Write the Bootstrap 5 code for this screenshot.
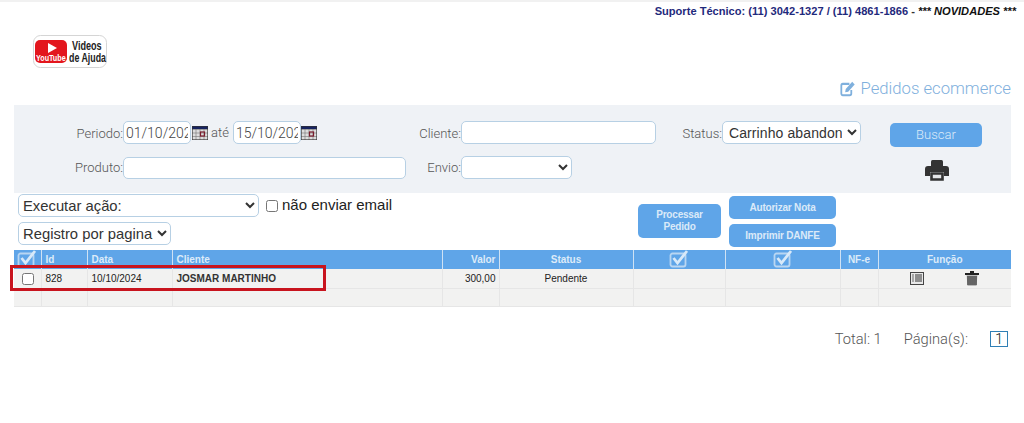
<!DOCTYPE html>
<html lang="pt-BR">
<head>
<meta charset="utf-8">
<title>Pedidos ecommerce</title>
<link href="https://cdn.jsdelivr.net/npm/bootstrap@5.3.0/dist/css/bootstrap.min.css" rel="stylesheet">
<style>
html,body{height:423px;overflow:hidden}
body{background:#fff;font-family:"Liberation Sans",Arial,sans-serif;color:#222}
.topband{height:2px;background:#f1f1f1}
.support{height:19px;padding:3px 8px 0 0;text-align:right;font-size:11.1px;line-height:13px;font-weight:700;color:#1f2a7c}
.support i{color:#111}
.support .plain{color:#333}
.logo-wrap{padding:14px 0 0 33px;height:52px}
.logo-wrap text{font-family:"Liberation Sans",sans-serif;font-weight:700}
.page-title{height:32px;padding:0 13px 0 0;display:flex;justify-content:flex-end;align-items:center;gap:5px;font:300 16.7px/20px Roboto,sans-serif;color:#7fb0dd}
.panel-wrap{margin:0 13px 0 14px;position:relative}
.filter-panel{background:#eff2f6;height:88px;display:grid;grid-template-columns:109px 283px 55px 195px 66px 139px 1fr;grid-template-rows:39px 35px;align-items:end;font:300 13px/20px Roboto,sans-serif;color:#555}
.lbl{text-align:right}
.lbl-low{padding-bottom:1px}
.fld{height:23px;border:1px solid #b7d0e4;border-radius:5px;background:#fff;padding:0 2px;font:300 14px/20px Roboto,sans-serif;color:#444;outline:0;min-width:0}
.fld-low{height:22px}
.sel{appearance:auto;font:14px "Liberation Sans",sans-serif;letter-spacing:.1px;color:#333}
.envio-sel{width:111px;height:23px}
.date{width:68px}
.cal{width:16px;height:14px;flex:none}
.cal-gap{margin-left:1px}
.date-row{display:flex;align-items:center}
.ate{margin:0 4px 0 3px}
.blue-btn{background:#5fa5e8;color:#dbeaf8;border:0;border-radius:5px;font:700 10px/12px "Liberation Sans",sans-serif;letter-spacing:-.2px;padding:0;display:flex;align-items:center;justify-content:center;text-align:center}
.blue-btn:hover{background:#5fa5e8;color:#dbeaf8}
.search-btn{width:92px;height:24px;margin-left:29px;font:300 13px/16px Roboto,sans-serif;letter-spacing:0}
.search-cell{align-self:start;padding-top:18px}
.print-cell{padding-left:64px;align-self:start;padding-top:16px;grid-column:7;grid-row:2}
.toolbar{height:57px;position:relative;display:flex}
.tool-left{width:624px;padding:1px 0 0 4px}
.tool-line{display:flex;align-items:center;font-size:15px;color:#222;height:23px}
.tool-line+.tool-line{margin-top:5px}
.tool-line input{width:12px;height:12px;margin:0 4px 0 7px}
.tool-sel{height:23px;border:1px solid #b7d0e4;border-radius:5px;padding:0;background:#fff;font:14.8px "Liberation Sans",sans-serif;color:#333;outline:0}
.sel-action{width:241px}
.sel-page{width:153px}
.proc{width:83px;height:34px;margin-top:11px}
.tool-stack{width:107px;margin:3px 0 0 8px;display:flex;flex-direction:column;gap:5px}
.tool-stack .blue-btn{height:23px}
.grid-tbl{width:997px;table-layout:fixed;border-collapse:collapse;font-size:10px;line-height:12px}
.grid-tbl th{background:#5fa5e8;color:#dcebf9;font-weight:700;height:19px;padding:1px 4px 0;border-right:1px solid #cfe2f4;vertical-align:middle;overflow:hidden}
.grid-tbl td{background:#f2f2f1;height:19px;padding:1px 4px 0;border-right:1px solid #e6e6e6;border-bottom:1px solid #e6e6e6;color:#222;font-weight:400;vertical-align:middle}
.grid-tbl tr:last-child td{height:18px}
.grid-tbl th:last-child,.grid-tbl td:last-child{border-right:0}
.grid-tbl .txt-r{padding-right:3px}
.grid-tbl .client{font-weight:700;color:#333}
.grid-tbl input{display:block;width:12px;height:12px;margin:1px 0 0 8px}
.grid-tbl th svg{display:block;margin:-1px auto 0}
.fn-cell{display:flex;justify-content:space-between;align-items:center;padding:0 32px 0 31px}
.highlight{position:absolute;left:-4px;top:160px;width:316px;height:26px;border:3px solid #c8141e;pointer-events:none}
.pager{display:flex;justify-content:flex-end;align-items:center;height:18px;margin-top:23px;padding-right:16px;font:300 14.7px/18px Roboto,sans-serif;color:#555;gap:22px}
.page-box{width:18px;height:16px;border:1px solid #2f7fb5;display:flex;align-items:center;justify-content:center;color:#222}
</style>
</head>
<body>
<div class="topband"></div>
<div class="support">Suporte Técnico: (11) 3042-1327 / (11) 4861-1866 <span class="plain">-</span> <i>*** NOVIDADES ***</i></div>
<div class="logo-wrap">
<svg width="74" height="33" viewBox="0 0 74 33" role="img" aria-label="Videos de Ajuda">
<rect x=".5" y=".5" width="73" height="32" rx="7" fill="#fff" stroke="#d5d5d5"/>
<rect x="2" y="5" width="32" height="23" rx="5" fill="#e3161d"/>
<path d="M15 8l9 5-9 5z" fill="#fff"/>
<text transform="translate(3 26) scale(.8 1)" font-size="9" fill="#fff">YouTube</text>
<text transform="translate(39 15) scale(.7 1)" font-size="13" fill="#222">Videos</text>
<text transform="translate(36 27) scale(.68 1)" font-size="13" fill="#222">de Ajuda</text>
</svg>
</div>
<div class="page-title">
<svg width="16" height="16" viewBox="0 0 17 15" preserveAspectRatio="none"><path d="M12 8.500v3.200c0 .9-.7 1.600-1.600 1.600H3c-.9 0-1.600-.7-1.600-1.600V4.300c0-.9.7-1.600 1.600-1.600h7" fill="none" stroke="#7fb0dd" stroke-width="1.900"/><path d="M5.500 10.500l.6-3L13 .8l2.600 2.500-6.900 6.700z" fill="#7fb0dd"/></svg>
<span>Pedidos ecommerce</span>
</div>
<div class="panel-wrap">
<div class="filter-panel">
<div class="lbl">Periodo:</div>
<div class="date-row">
<input class="fld date" value="01/10/2024">
<svg class="cal cal-gap" viewBox="0 0 16 14"><rect width="16" height="14" fill="#ddd"/><rect width="16" height="3" fill="#17235f"/><path d="M0 3.500h16M0 7h16M0 10.500h16M4 3v11M8 3v11M12 3v11" stroke="#777" stroke-width=".6"/><rect x="8.500" y="6" width="4" height="4" fill="none" stroke="#7a1c2c" stroke-width="1.200"/><rect x=".3" y=".3" width="15.400" height="13.400" fill="none" stroke="#333" stroke-width=".6"/></svg>
<span class="ate">até</span>
<input class="fld date" value="15/10/2024">
<svg class="cal" viewBox="0 0 16 14"><rect width="16" height="14" fill="#ddd"/><rect width="16" height="3" fill="#17235f"/><path d="M0 3.500h16M0 7h16M0 10.500h16M4 3v11M8 3v11M12 3v11" stroke="#777" stroke-width=".6"/><rect x="8.500" y="6" width="4" height="4" fill="none" stroke="#7a1c2c" stroke-width="1.200"/><rect x=".3" y=".3" width="15.400" height="13.400" fill="none" stroke="#333" stroke-width=".6"/></svg>
</div>
<div class="lbl">Cliente:</div>
<input class="fld">
<div class="lbl">Status:</div>
<select class="fld sel"><option>Carrinho abandonado</option></select>
<div class="search-cell"><button class="btn blue-btn search-btn" type="button">Buscar</button></div>
<div class="lbl lbl-low">Produto:</div>
<input class="fld fld-low">
<div class="lbl lbl-low">Envio:</div>
<select class="fld sel envio-sel"><option></option></select>
<div></div>
<div></div>
<div class="print-cell">
<svg width="24" height="21" viewBox="0 0 24 21"><path d="M6 1.500A1.500 1.500 0 0 1 7.500 0h9A1.500 1.500 0 0 1 18 1.500V6H6z" fill="#333"/><path d="M3 6h18a3 3 0 0 1 3 3v7h-5v-4H5v4H0V9a3 3 0 0 1 3-3z" fill="#333"/><path d="M6.500 13.500h11v6h-11z" fill="#e4e6e8" stroke="#333" stroke-width="2.600"/></svg>
</div>
</div>
<div class="toolbar">
<div class="tool-left">
<div class="tool-line">
<select class="tool-sel sel-action"><option>Executar ação:</option></select>
<input type="checkbox"><span>não enviar email</span>
</div>
<div class="tool-line">
<select class="tool-sel sel-page"><option>Registro por pagina</option></select>
</div>
</div>
<button class="btn blue-btn proc" type="button">Processar<br>Pedido</button>
<div class="tool-stack">
<button class="btn blue-btn" type="button">Autorizar Nota</button>
<button class="btn blue-btn" type="button">Imprimir DANFE</button>
</div>
</div>
<table class="grid-tbl">
<colgroup><col style="width:27px"><col style="width:46px"><col style="width:85px"><col style="width:270px"><col style="width:57px"><col style="width:134px"><col style="width:92px"><col style="width:115px"><col style="width:38px"><col style="width:133px"></colgroup>
<thead><tr>
<th class="p-0"><svg width="20" height="18" viewBox="0 0 20 18"><rect x="1.500" y="3.500" width="15" height="13" rx="2" fill="none" stroke="#b9d6f2" stroke-width="1.800"/><path d="M4.500 8l4 5L18 1" fill="none" stroke="#d8e9f9" stroke-width="2.800"/></svg></th>
<th>Id</th><th>Data</th><th>Cliente</th><th class="text-end txt-r">Valor</th><th class="text-center">Status</th>
<th class="p-0"><svg width="20" height="18" viewBox="0 0 20 18"><rect x="1.500" y="3.500" width="15" height="13" rx="2" fill="none" stroke="#b9d6f2" stroke-width="1.800"/><path d="M4.500 8l4 5L18 1" fill="none" stroke="#d8e9f9" stroke-width="2.800"/></svg></th>
<th class="p-0"><svg width="20" height="18" viewBox="0 0 20 18"><rect x="1.500" y="3.500" width="15" height="13" rx="2" fill="none" stroke="#b9d6f2" stroke-width="1.800"/><path d="M4.500 8l4 5L18 1" fill="none" stroke="#d8e9f9" stroke-width="2.800"/></svg></th>
<th class="text-center p-0">NF-e</th><th class="text-center">Função</th>
</tr></thead>
<tbody>
<tr>
<td class="p-0"><input type="checkbox"></td>
<td>828</td><td>10/10/2024</td><td class="client">JOSMAR MARTINHO</td><td class="text-end txt-r">300,00</td><td class="text-center">Pendente</td><td></td><td></td><td></td>
<td class="p-0"><div class="fn-cell">
<svg width="14" height="13" viewBox="0 0 14 13"><rect x=".5" y=".5" width="13" height="12" fill="#e8e8e8" stroke="#444"/><path d="M5 3h7M5 5h7M5 7h7M5 9h7" stroke="#333"/><path d="M2 3h2M2 5h2M2 7h2M2 9h2" stroke="#666"/></svg>
<svg width="14" height="15" viewBox="0 0 14 15"><path d="M0 2h14v2H0zM5 0h4v2H5z" fill="#222"/><path d="M1.500 4h11l-1 11h-9z" fill="#bbb"/><path d="M3 5v9M5 5v9M7 5v9M9 5v9M11 5v9" stroke="#111" stroke-width="1"/></svg>
</div></td>
</tr>
<tr><td></td><td></td><td></td><td></td><td></td><td></td><td></td><td></td><td></td><td></td></tr>
</tbody>
</table>
<div class="highlight"></div>
</div>
<div class="pager"><span>Total: 1</span><span>Página(s):</span><span class="page-box">1</span></div>
<script src="https://cdn.jsdelivr.net/npm/bootstrap@5.3.0/dist/js/bootstrap.bundle.min.js"></script>
</body>
</html>
